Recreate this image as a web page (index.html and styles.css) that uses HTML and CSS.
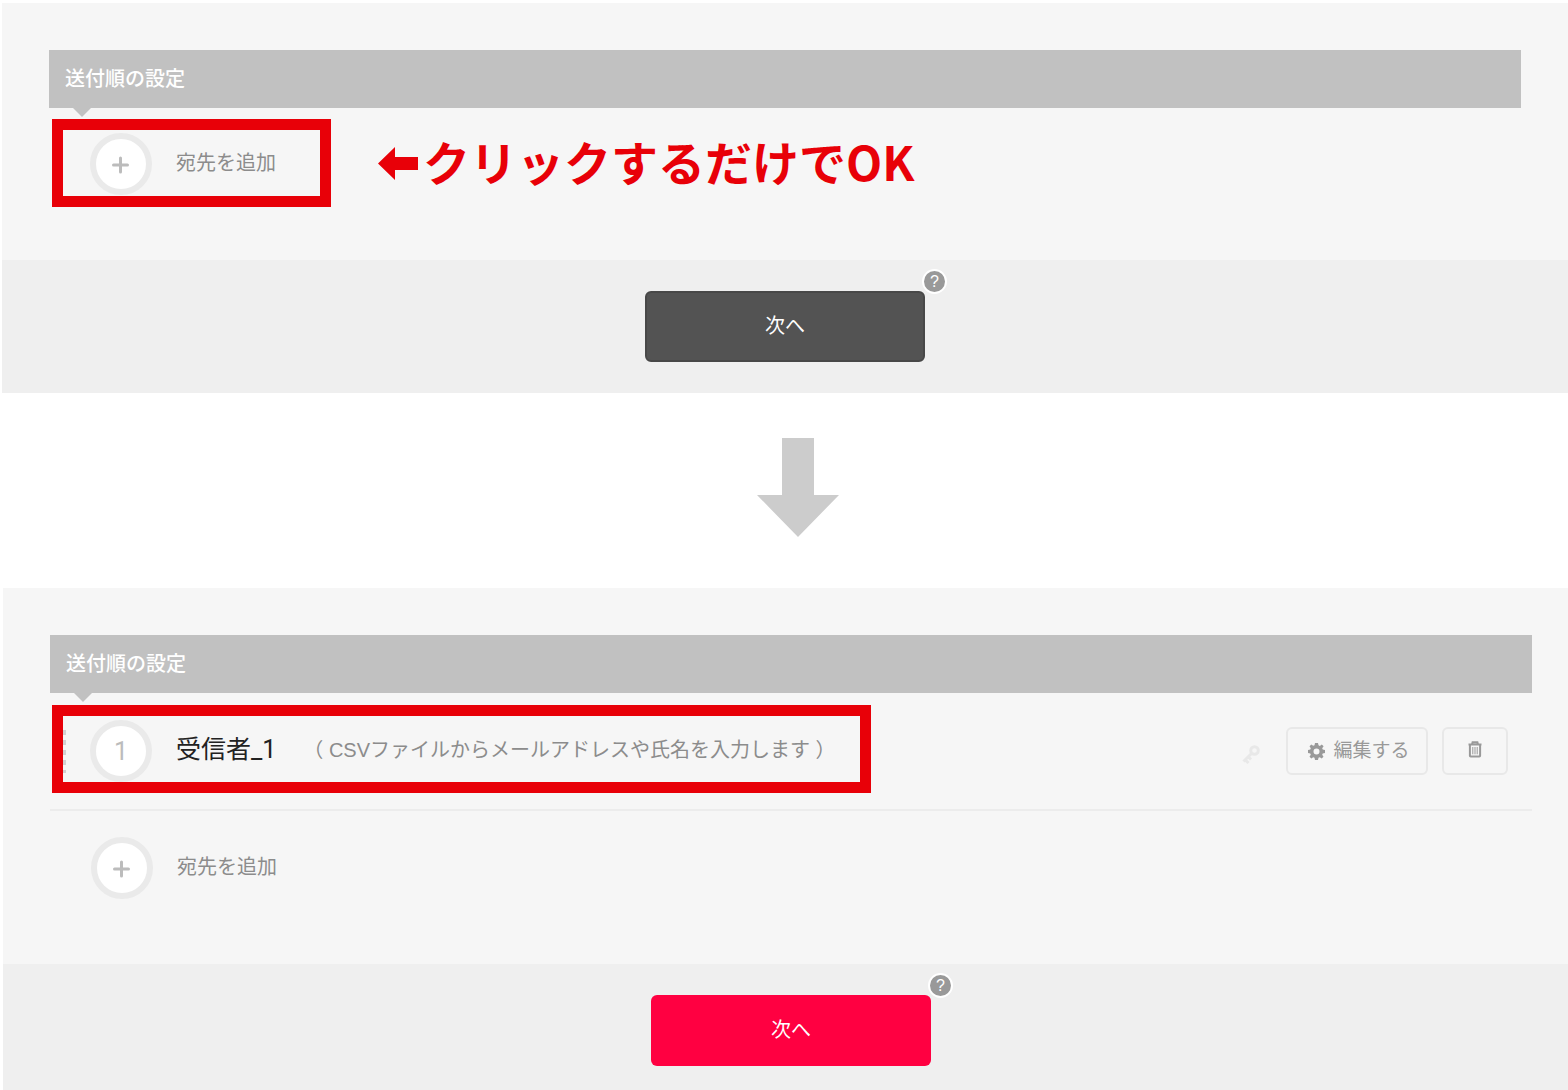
FILE: index.html
```html
<!DOCTYPE html>
<html lang="ja">
<head>
<meta charset="utf-8">
<meta name="viewport" content="width=device-width, initial-scale=1">
<title>送付順の設定</title>
<link rel="stylesheet" href="styles.css">
</head>
<body>
<main>
  <section class="panel panel-before">
    <div class="panel-body">
      <h2 class="panel-title">送付順の設定</h2>
      <div class="row">
        <button type="button" class="step marked add-marked">
          <span class="circle"><svg width="18" height="18" viewBox="0 0 18 18" aria-hidden="true"><path d="M8.500 2V16M1.500 9H15.500" /></svg></span>
          <span class="label">宛先を追加</span>
        </button>
        <p class="callout"><svg width="40" height="33" viewBox="0 0 40 33" aria-hidden="true"><path d="M0 16.500 17 0V10H40V23H17V33Z"/></svg><span>クリックするだけでOK</span></p>
      </div>
    </div>
    <footer class="panel-footer">
      <div class="next-wrap">
        <button type="button" class="next next-idle">次へ</button>
        <button type="button" class="help" aria-label="ヘルプ">?</button>
      </div>
    </footer>
  </section>

  <div class="flow-arrow">
    <svg width="82" height="99" viewBox="0 0 82 99" aria-hidden="true"><path d="M25 0H57V57H82L41 99 0 57H25Z"/></svg>
  </div>

  <section class="panel panel-after">
    <div class="panel-body">
      <h2 class="panel-title">送付順の設定</h2>
      <div class="row row-recipient">
        <div class="step marked recipient">
          <span class="handle"></span>
          <span class="circle number">1</span>
          <span class="label name">受信者_1</span>
          <span class="label note">（ CSVファイルからメールアドレスや氏名を入力します ）</span>
        </div>
        <div class="actions">
          <svg class="key" width="18" height="19" viewBox="0 0 18 19" aria-hidden="true"><circle cx="12.500" cy="5.500" r="3.800"/><path d="M10 8 1.500 16.500M3 14.500 6.500 18M6 11.500 9 14.500"/></svg>
          <button type="button" class="tool edit">
            <svg width="17" height="17" viewBox="0 0 17 17" aria-hidden="true"><path fill-rule="evenodd" d="M7 0H10L10.500 2.300 11.800 2.900 13.800 1.500 15.600 3.300 14.200 5.300 14.700 6.500 17 7V10L14.700 10.500 14.200 11.800 15.500 13.700 13.700 15.500 11.800 14.200 10.500 14.700 10 17H7L6.500 14.700 5.200 14.200 3.300 15.500 1.500 13.700 2.800 11.800 2.300 10.500 0 10V7L2.300 6.500 2.800 5.200 1.500 3.300 3.300 1.500 5.200 2.800 6.500 2.300ZM8.500 5.500A3 3 0 1 0 8.500 11.500 3 3 0 1 0 8.500 5.500Z"/></svg>
            <span>編集する</span>
          </button>
          <button type="button" class="tool delete" aria-label="削除">
            <svg width="14" height="17" viewBox="0 0 14 17" aria-hidden="true"><path class="can" d="M.5 3.500H13.500M4 3.500 4.600 1.200H9.400L10 3.500M1.900 3.500V14.800Q1.900 15.600 2.700 15.600H11.300Q12.100 15.600 12.100 14.800V3.500"/><path class="ribs" d="M4.800 6V13.300M7 6V13.300M9.200 6V13.300"/></svg>
          </button>
        </div>
      </div>
      <div class="row row-add">
        <button type="button" class="step">
          <span class="circle"><svg width="18" height="18" viewBox="0 0 18 18" aria-hidden="true"><path d="M8.500 2V16M1.500 9H15.500" /></svg></span>
          <span class="label">宛先を追加</span>
        </button>
      </div>
    </div>
    <footer class="panel-footer">
      <div class="next-wrap">
        <button type="button" class="next next-ready">次へ</button>
        <button type="button" class="help" aria-label="ヘルプ">?</button>
      </div>
    </footer>
  </section>
</main>
</body>
</html>
```
FILE: styles.css
```css
* {
  box-sizing: border-box;
}

body {
  margin: 0;
  background: #fff;
  color: #8c8c8c;
  font: 20px/30px "Liberation Sans", "Noto Sans CJK JP", sans-serif;
}

button {
  margin: 0;
  padding: 0;
  border: 0;
  background: none;
  color: inherit;
  font: inherit;
  cursor: pointer;
}

svg {
  flex: none;
  display: block;
}

.panel {
  background: #f6f6f6;
}

.panel-before {
  margin-left: 2px;
  border-top: 3px solid #fff;
}

.panel-after {
  margin-left: 3px;
}

.panel-body {
  padding: 47px 47px 0;
}

.panel-after .panel-body {
  padding-right: 36px;
}

.panel-title {
  position: relative;
  margin: 0;
  padding: 14px 16px;
  background: #c1c1c1;
  color: #fff;
  font-size: 20px;
  font-weight: 500;
  line-height: 30px;
}

/* Pointer under the heading bar */
.panel-title::after {
  content: "";
  position: absolute;
  top: 100%;
  left: 24px;
  border: 9px solid transparent;
  border-top-color: #c1c1c1;
  border-bottom: 0;
}

.row {
  display: flex;
  align-items: flex-start;
}

.panel-before .row {
  gap: 47px;
  padding: 11px 0 53px 3px;
}

.row-recipient {
  justify-content: space-between;
  padding: 12px 24px 16px 2px;
  border-bottom: 2px solid #ececec;
}

.row-add {
  padding: 26px 0 65px 41px;
}

.step {
  display: flex;
  align-items: center;
  gap: 24px;
  text-align: left;
}

.marked {
  height: 88px;
  border: 11px solid #e80008;
}

.add-marked {
  padding: 2px 44px 0 27px;
}

.recipient {
  padding: 4px 24px 0 0;
}

.circle {
  flex: none;
  display: flex;
  align-items: center;
  justify-content: center;
  width: 62px;
  height: 62px;
  padding-top: 2px;
  border: 6px solid #eaeaea;
  border-radius: 50%;
  background: #fff;
}

.circle path {
  fill: none;
  stroke: #bcbcbc;
  stroke-width: 3;
  stroke-linecap: round;
}

.number {
  color: #bcbcbc;
  font-family: Roboto, sans-serif;
  font-size: 25px;
}

.label {
  padding-bottom: 2px;
  white-space: nowrap;
}

.name {
  padding-right: 3px;
  color: #222;
  font-family: Roboto, "Noto Sans CJK JP", sans-serif;
  font-size: 25px;
}

.handle {
  width: 3px;
  height: 43px;
  background: repeating-linear-gradient(#d2d2d2 0 5px, transparent 5px 10px);
}

.callout {
  display: flex;
  align-items: center;
  gap: 5px;
  margin: 0;
  height: 88px;
  color: #e80008;
  font: bold 47px/60px "Noto Sans CJK JP", sans-serif;
  white-space: nowrap;
}

.callout span {
  padding-bottom: 4px;
}

.callout path {
  fill: #e80008;
}

.actions {
  display: flex;
  align-items: center;
  gap: 14px;
  padding-top: 22px;
}

.key {
  margin: 6px 12px 0 0;
  fill: none;
  stroke: #e8e8e8;
  stroke-width: 3;
}

.tool {
  display: flex;
  align-items: center;
  justify-content: center;
  height: 48px;
  border: 2px solid #e8e8e8;
  border-radius: 6px;
  color: #999;
  font-size: 19px;
}

.edit {
  gap: 8px;
  width: 142px;
  padding-left: 4px;
}

.edit path {
  fill: #999;
}

.delete {
  width: 66px;
  padding-bottom: 4px;
}

.can,
.ribs {
  fill: none;
  stroke: #999;
  stroke-width: 2;
}

.ribs {
  stroke-width: 1;
}

.panel-footer {
  display: flex;
  justify-content: center;
  padding: 31px 0;
  background: #efefef;
}

.panel-after .panel-footer {
  padding: 31px 0 24px 11px;
}

.next-wrap {
  position: relative;
}

.next {
  display: block;
  width: 280px;
  height: 71px;
  padding-bottom: 2px;
  border-radius: 6px;
  color: #fff;
}

.next-idle {
  border: 2px solid #484848;
  background: #535353;
}

.next-ready {
  background: #ff0041;
}

.help {
  position: absolute;
  top: -22px;
  right: -22px;
  width: 25px;
  height: 25px;
  border: 2px solid #fff;
  border-radius: 50%;
  background: #999;
  color: #fff;
  font-size: 16px;
  line-height: 21px;
}

.flow-arrow {
  display: flex;
  justify-content: center;
  padding: 45px 0 51px 28px;
}

.flow-arrow path {
  fill: #ccc;
}
```
